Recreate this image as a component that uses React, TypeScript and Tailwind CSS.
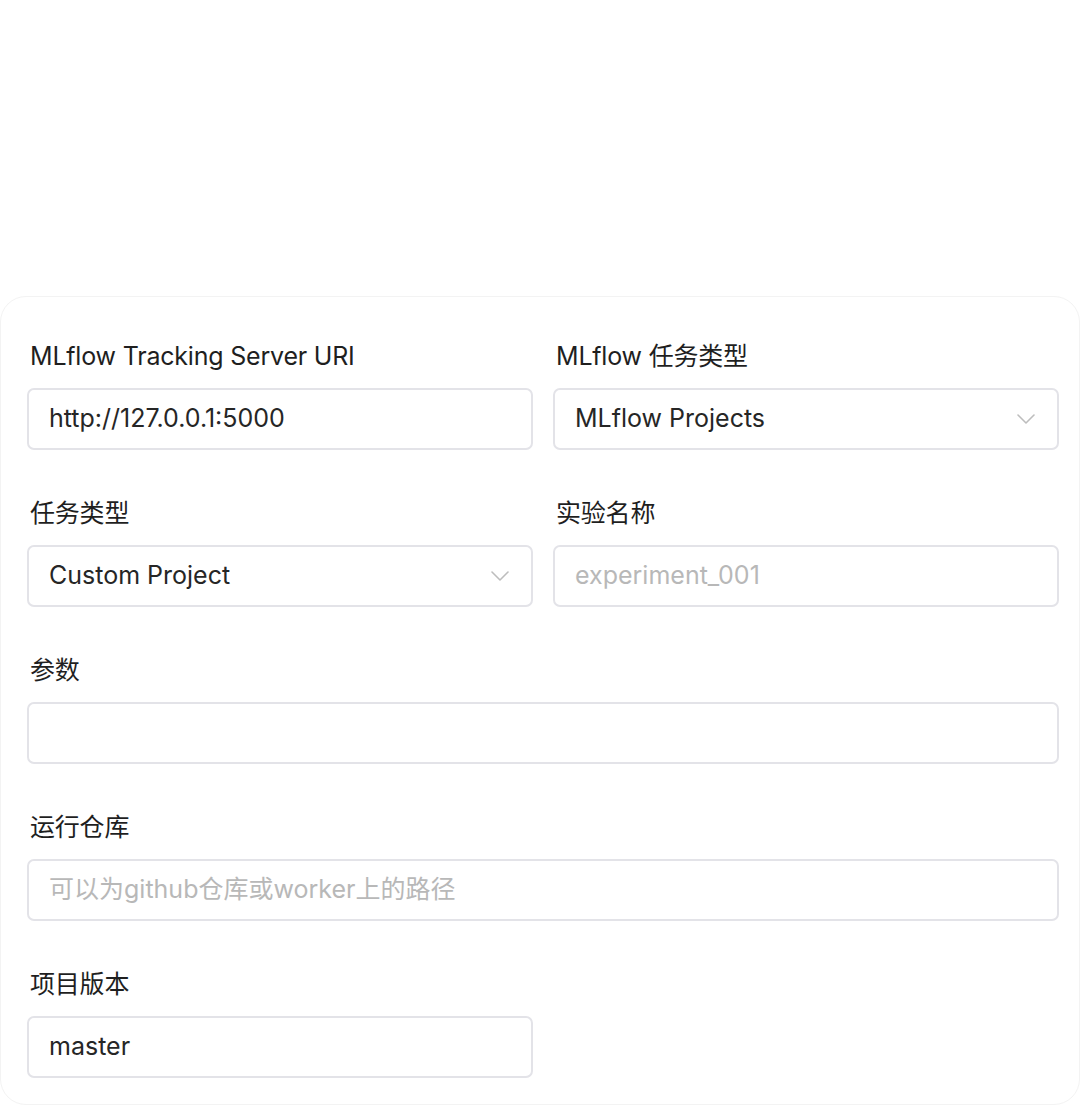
import { ReactNode } from "react"

const font = { fontFamily: '"Inter", "Noto Sans CJK SC", sans-serif' }

function Field({ label, children, full }: { label: string; children: ReactNode; full?: boolean }) {
  return (
    <div className={full ? "col-span-2" : ""}>
      <div className="mb-4 h-8 pl-[3px] text-[25px] leading-8 tracking-[-0.2px] text-[#1f1f1f]">{label}</div>
      {children}
    </div>
  )
}

function Box({ value, placeholder, select }: { value?: string; placeholder?: string; select?: boolean }) {
  return (
    <div className="flex h-[62px] items-center justify-between rounded-[7px] border-2 border-[#e3e3e8] bg-white pl-[20px] pr-[22px] text-[25px]">
      {value ? (
        <span className="text-[#262626]">{value}</span>
      ) : (
        <span className="text-[#b8b8b8]">{placeholder ?? ""}</span>
      )}
      {select && (
        <svg width="18" height="10" viewBox="0 0 18 10" fill="none">
          <polyline points="1,1 9,9 17,1" stroke="#bdbdbd" strokeWidth="1.6" strokeLinecap="round" strokeLinejoin="round" />
        </svg>
      )}
    </div>
  )
}

export default function App() {
  return (
    <div className="min-h-[1109px] bg-white pt-[296px]" style={font}>
      <div className="rounded-[26px] border border-[#f3f3f3] bg-white pb-[26px] pl-[26px] pr-[20px] pt-[43px]">
        <div className="grid grid-cols-2 gap-x-[20px] gap-y-[47px]">
          <Field label="MLflow Tracking Server URI">
            <Box value="http://127.0.0.1:5000" />
          </Field>
          <Field label="MLflow 任务类型">
            <Box value="MLflow Projects" select />
          </Field>
          <Field label="任务类型">
            <Box value="Custom Project" select />
          </Field>
          <Field label="实验名称">
            <Box placeholder="experiment_001" />
          </Field>
          <Field label="参数" full>
            <Box />
          </Field>
          <Field label="运行仓库" full>
            <Box placeholder="可以为github仓库或worker上的路径" />
          </Field>
          <Field label="项目版本">
            <Box value="master" />
          </Field>
        </div>
      </div>
    </div>
  )
}
